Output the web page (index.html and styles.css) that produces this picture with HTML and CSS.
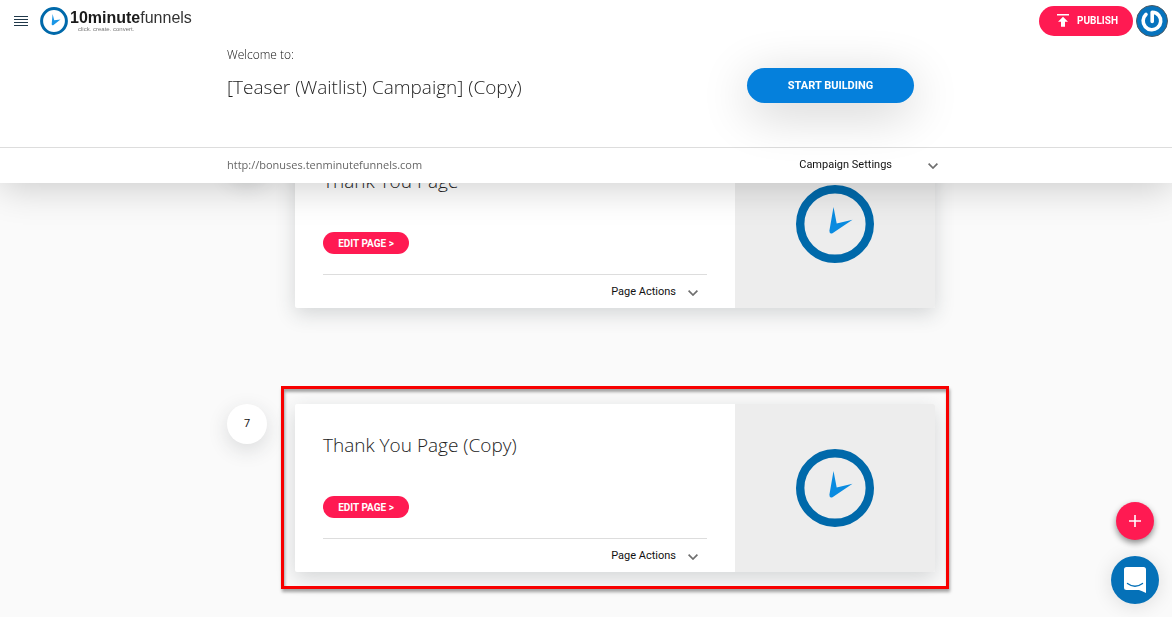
FILE: index.html
```html
<!DOCTYPE html>
<html lang="en">
<head>
  <meta charset="UTF-8">
  <meta name="viewport" content="width=device-width, initial-scale=1.0">
  <title>10minutefunnels</title>
  <link rel="stylesheet" href="styles.css">
</head>
<body>
  <svg class="defs" aria-hidden="true">
    <symbol id="clock" viewBox="0 0 78 78">
      <circle cx="39" cy="39" r="34.8" fill="none" stroke="#0069aa" stroke-width="8.4"/>
      <path d="M37.5 22 L40.7 38.6 L56.5 34.8 L36.5 48.2 Q33.4 49.5 33.4 45.8 Z" fill="#0a8be0"/>
    </symbol>
    <symbol id="chevron" viewBox="0 0 10 6">
      <path d="M.6 .7 L5 5 L9.4 .7" fill="none" stroke="#6e6e6e" stroke-width="1.7"/>
    </symbol>
  </svg>
  <header class="header">
    <nav class="topbar">
      <button class="menu" aria-label="Menu">
        <svg width="14" height="10" viewBox="0 0 14 10" shape-rendering="crispEdges"><path d="M0 .5h14M0 3.500h14M0 6.500h14M0 9.500h14" stroke="#20384a"/></svg>
      </button>
      <a href="#" class="logo">
        <svg class="logo-icon" viewBox="0 0 28 28">
          <circle cx="14" cy="14" r="12.4" fill="none" stroke="#0069aa" stroke-width="3"/>
          <path d="M12.600 7 L14.200 13.200 L20.500 12.600 L13.200 18.200 Q11.600 18.600 11.700 17 Z" fill="#1a96e6"/>
        </svg>
        <span class="logo-text">
          <span class="logo-name"><b>10minute</b>funnels</span>
          <span class="tagline">click. create. convert.</span>
        </span>
      </a>
      <button class="btn publish">
        <svg width="12" height="13" viewBox="0 0 12 13"><path d="M0 0h12v1.6H0zM6 2.8l5 5H8v5H4v-5H1z" fill="#fff"/></svg>
        PUBLISH
      </button>
      <a href="#" class="avatar" aria-label="Account">
        <svg width="32" height="32" viewBox="0 0 32 32">
          <circle cx="16" cy="16" r="15.5" fill="#0673bd" stroke="#4c5a64"/>
          <path d="M10 9.400A8.800 8.800 0 1 0 22.800 10.400Q20.800 7.300 16.200 7.200V16.500" fill="none" stroke="#fff" stroke-width="3.600" stroke-linecap="round" stroke-linejoin="round"/>
        </svg>
      </a>
    </nav>
    <div class="wrap campaign">
      <div>
        <p class="welcome">Welcome to:</p>
        <h1>[Teaser (Waitlist) Campaign] (Copy)</h1>
      </div>
      <button class="btn start">START BUILDING</button>
    </div>
    <div class="subbar">
      <div class="wrap subbar-inner">
        <a href="#" class="url">http://bonuses.tenminutefunnels.com</a>
        <button class="dropdown settings">Campaign Settings <svg class="chevron"><use href="#chevron"/></svg></button>
      </div>
    </div>
  </header>
  <main class="wrap steps">
    <section class="step">
      <span class="number">6</span>
      <div class="card">
        <div class="card-body">
          <h2>Thank You Page</h2>
          <button class="btn edit">EDIT PAGE &gt;</button>
          <div class="card-footer">
            <button class="dropdown">Page Actions <svg class="chevron"><use href="#chevron"/></svg></button>
          </div>
        </div>
        <div class="thumb"><svg class="clock"><use href="#clock"/></svg></div>
      </div>
    </section>
    <section class="step">
      <span class="number">7</span>
      <div class="card highlight">
        <div class="card-body">
          <h2>Thank You Page (Copy)</h2>
          <button class="btn edit">EDIT PAGE &gt;</button>
          <div class="card-footer">
            <button class="dropdown">Page Actions <svg class="chevron"><use href="#chevron"/></svg></button>
          </div>
        </div>
        <div class="thumb"><svg class="clock"><use href="#clock"/></svg></div>
      </div>
    </section>
  </main>
  <div class="floating">
    <button class="add" aria-label="Add page">
      <svg width="12" height="12" viewBox="0 0 12 12"><path d="M6 0v12M0 6h12" stroke="#fff" stroke-width="1.6"/></svg>
    </button>
    <button class="chat" aria-label="Open chat">
      <svg width="22" height="26" viewBox="0 0 22 26">
        <path d="M2.5 0h17A2.5 2.5 0 0 1 22 2.500V26q-4-2.200-7-3H2.500A2.500 2.500 0 0 1 0 20.500V2.500A2.500 2.500 0 0 1 2.500 0z" fill="#fff"/>
        <path d="M3.500 16.500q7.500 5.500 15 0" fill="none" stroke="#0571b8" stroke-width="1.400" stroke-linecap="round"/>
      </svg>
    </button>
  </div>
</body>
</html>
```

FILE: styles.css
```css
* {
  padding: 0;
  margin: 0;
  box-sizing: border-box;
}
body {
  min-height: 100vh;
  background-color: #fafafa;
  font-family: Roboto, sans-serif;
  font-size: 11px;
  color: #111;
}
button {
  border: none;
  background: none;
  font: inherit;
  color: inherit;
  cursor: pointer;
}
a {
  text-decoration: none;
  color: inherit;
}
.defs {
  position: absolute;
  width: 0;
  height: 0;
}
.wrap {
  width: 100%;
  max-width: 718px;
  margin: 0 auto;
}
.btn {
  border-radius: 20px;
  background-color: #ff1a52;
  color: #fff;
  font-weight: 700;
}
.header {
  position: fixed;
  top: 0;
  left: 0;
  right: 0;
  z-index: 2;
  background-color: #fff;
  box-shadow: 0 4px 36px rgba(0, 0, 0, 0.2);
}
.topbar {
  display: flex;
  align-items: center;
  height: 41px;
  padding: 0 4px 0 14px;
}
.menu {
  display: flex;
  margin-right: 12px;
}
.logo {
  display: flex;
  align-items: center;
  gap: 2px;
  margin-right: auto;
  font-family: "Liberation Sans", sans-serif;
}
.logo-icon {
  width: 28px;
  height: 28px;
}
.logo-text {
  display: flex;
  flex-direction: column;
}
.logo-name {
  font-size: 16px;
  line-height: 16px;
  color: #333;
}
.logo-name b {
  color: #1b1b1b;
}
.tagline {
  padding-left: 8px;
  font-size: 6px;
  line-height: 6px;
  color: #777;
}
.publish {
  display: flex;
  align-items: center;
  gap: 8px;
  height: 30px;
  padding: 0 15px 0 18px;
  margin-right: 3px;
  font-size: 10px;
}
.avatar {
  display: flex;
}
.campaign {
  display: flex;
  justify-content: space-between;
  height: 106px;
  padding: 4px 31px 0 0;
}
.welcome {
  font: 300 12px/20px "Open Sans", sans-serif;
}
h1, h2 {
  font: 300 19px/28px "Open Sans", sans-serif;
  color: #222;
}
h1 {
  margin-top: 8px;
}
.start {
  width: 167px;
  height: 35px;
  margin-top: 23px;
  background-color: #0580dc;
  box-shadow: 0 10px 50px rgba(0, 0, 0, 0.2);
}
.subbar {
  border-top: 1px solid #ddd;
}
.subbar-inner {
  display: flex;
  justify-content: space-between;
  align-items: center;
  height: 35px;
  padding: 0 7px 2px 0;
}
.url {
  font: 11px "Open Sans", sans-serif;
  color: #666;
}
.dropdown {
  display: flex;
  align-items: center;
  gap: 12px;
}
.settings {
  gap: 36px;
}
.chevron {
  width: 10px;
  height: 6px;
  margin-top: 2px;
}
.steps {
  padding: 140px 0 44px;
}
.step {
  display: flex;
  gap: 28px;
  padding-right: 10px;
  margin-bottom: 96px;
}
.step:last-child {
  margin-bottom: 0;
}
.number {
  flex: none;
  width: 40px;
  height: 40px;
  border-radius: 50%;
  background-color: #fff;
  line-height: 40px;
  text-align: center;
  box-shadow: 0 6px 20px rgba(38, 50, 56, 0.15);
}
.card {
  position: relative;
  flex: 1;
  display: flex;
  height: 168px;
  border-radius: 2px;
  background-color: #fff;
  box-shadow: 0 6px 20px rgba(38, 50, 56, 0.18);
}
.highlight::after {
  content: "";
  position: absolute;
  inset: -18px -14px -17px;
  border: 3px solid #f80000;
  box-shadow: 1px 3px 3px rgba(0, 0, 0, 0.35), inset 1px 3px 3px rgba(0, 0, 0, 0.35);
  pointer-events: none;
}
.card-body {
  flex: 1;
  padding: 27px 28px 0;
}
.edit {
  display: block;
  width: 86px;
  height: 22px;
  margin: 37px 0 20px;
  font-size: 10px;
}
.card-footer {
  display: flex;
  justify-content: flex-end;
  height: 34px;
  padding-right: 9px;
  border-top: 1px solid #ddd;
}
.thumb {
  display: grid;
  place-items: center;
  width: 200px;
  border-radius: 0 2px 2px 0;
  background-color: #ededed;
}
.clock {
  width: 78px;
  height: 78px;
}
.floating {
  position: fixed;
  right: 13px;
  bottom: 13px;
  z-index: 3;
  display: flex;
  flex-direction: column;
  align-items: center;
  gap: 16px;
}
.add, .chat {
  display: grid;
  place-items: center;
  border-radius: 50%;
}
.add {
  width: 38px;
  height: 38px;
  background-color: #ff1a52;
  box-shadow: 0 3px 6px rgba(0, 0, 0, 0.45);
}
.chat {
  width: 48px;
  height: 48px;
  background-color: #0571b8;
  box-shadow: 0 2px 20px rgba(0, 0, 0, 0.12);
}
```
